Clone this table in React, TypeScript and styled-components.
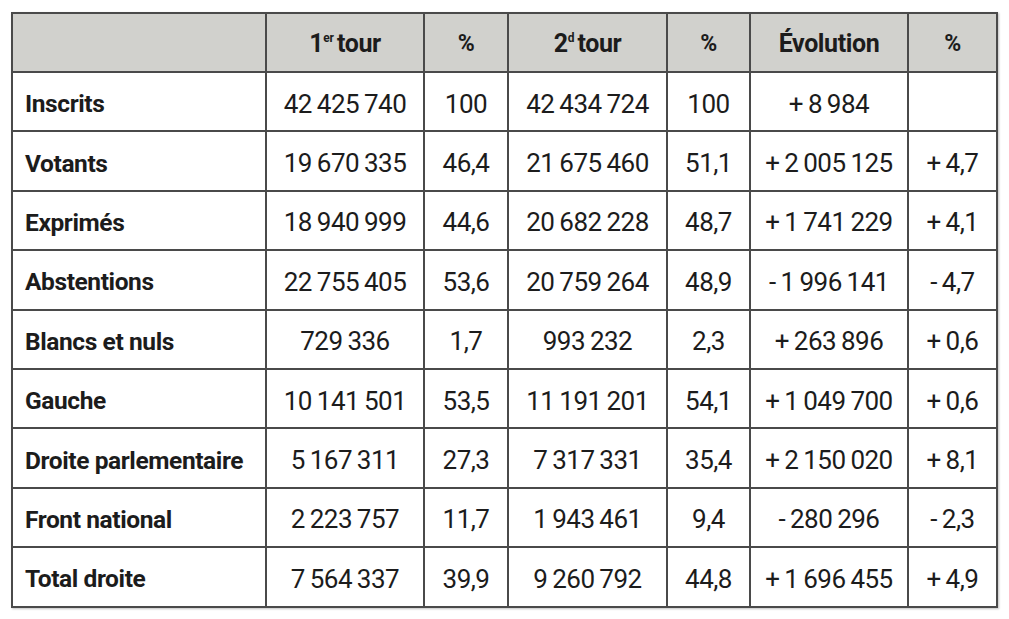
import React from "react";
import styled, { createGlobalStyle } from "styled-components";

const Global = createGlobalStyle`
  html, body { margin: 0; padding: 0; background: #ffffff; }
  body { font-family: Roboto, "Liberation Sans", sans-serif; color: #1c1c1c; }
`;

const Page = styled.div`
  padding: 12px 0 0 11px;
  width: 1009px;
  height: 619px;
  box-sizing: border-box;
`;

const Table = styled.table`
  border-collapse: collapse;
  table-layout: fixed;
  width: 985px;
  border: 2px solid #4a4a4a;
  box-shadow: 1px 1px 2px rgba(0, 0, 0, 0.25);
`;

const HeadRow = styled.tr`
  background: #d1d1cd;
`;

const Row = styled.tr`
  background: #ffffff;
`;

const Th = styled.th<{ $small?: boolean }>`
  border: 2px solid #4a4a4a;
  height: 55px;
  padding: 2px 0 0 0;
  text-align: center;
  font-weight: 700;
  font-size: ${(p) => (p.$small ? "23px" : "25px")};
  letter-spacing: -0.4px;
  color: #1c1c1c;
`;

const Sup = styled.sup`
  font-size: 12px;
  vertical-align: 0;
  position: relative;
  top: -10px;
  margin-right: 3px;
  letter-spacing: 0;
`;

const Label = styled.td`
  border: 2px solid #4a4a4a;
  height: 53.4px;
  padding: 4px 0 0 12px;
  text-align: left;
  font-weight: 700;
  font-size: 24.5px;
  letter-spacing: -0.4px;
`;

const Cell = styled.td`
  border: 2px solid #4a4a4a;
  height: 53.4px;
  padding: 4px 0 0 0;
  text-align: center;
  font-weight: 400;
  font-size: 26px;
  letter-spacing: -0.5px;
  white-space: nowrap;
`;

const S = "\u2009";

type R = [string, string, string, string, string, string, string];

const rows: R[] = [
  ["Inscrits", `42${S}425${S}740`, "100", `42${S}434${S}724`, "100", `+${S}8${S}984`, ""],
  ["Votants", `19${S}670${S}335`, "46,4", `21${S}675${S}460`, "51,1", `+${S}2${S}005${S}125`, `+${S}4,7`],
  ["Exprimés", `18${S}940${S}999`, "44,6", `20${S}682${S}228`, "48,7", `+${S}1${S}741${S}229`, `+${S}4,1`],
  ["Abstentions", `22${S}755${S}405`, "53,6", `20${S}759${S}264`, "48,9", `-${S}1${S}996${S}141`, `-${S}4,7`],
  ["Blancs et nuls", `729${S}336`, "1,7", `993${S}232`, "2,3", `+${S}263${S}896`, `+${S}0,6`],
  ["Gauche", `10${S}141${S}501`, "53,5", `11${S}191${S}201`, "54,1", `+${S}1${S}049${S}700`, `+${S}0,6`],
  ["Droite parlementaire", `5${S}167${S}311`, "27,3", `7${S}317${S}331`, "35,4", `+${S}2${S}150${S}020`, `+${S}8,1`],
  ["Front national", `2${S}223${S}757`, "11,7", `1${S}943${S}461`, "9,4", `-${S}280${S}296`, `-${S}2,3`],
  ["Total droite", `7${S}564${S}337`, "39,9", `9${S}260${S}792`, "44,8", `+${S}1${S}696${S}455`, `+${S}4,9`],
];

const widths = [254, 158, 84, 159, 83, 158, 89];

export default function App() {
  return (
    <Page>
      <Global />
      <Table>
        <colgroup>
          {widths.map((w, i) => (
            <col key={i} style={{ width: w }} />
          ))}
        </colgroup>
        <thead>
          <HeadRow>
            <Th />
            <Th>
              1<Sup>er</Sup>tour
            </Th>
            <Th $small>%</Th>
            <Th>
              2<Sup>d</Sup>tour
            </Th>
            <Th $small>%</Th>
            <Th>Évolution</Th>
            <Th $small>%</Th>
          </HeadRow>
        </thead>
        <tbody>
          {rows.map((r) => (
            <Row key={r[0]}>
              <Label>{r[0]}</Label>
              {r.slice(1).map((v, i) => (
                <Cell key={i}>{v}</Cell>
              ))}
            </Row>
          ))}
        </tbody>
      </Table>
    </Page>
  );
}
